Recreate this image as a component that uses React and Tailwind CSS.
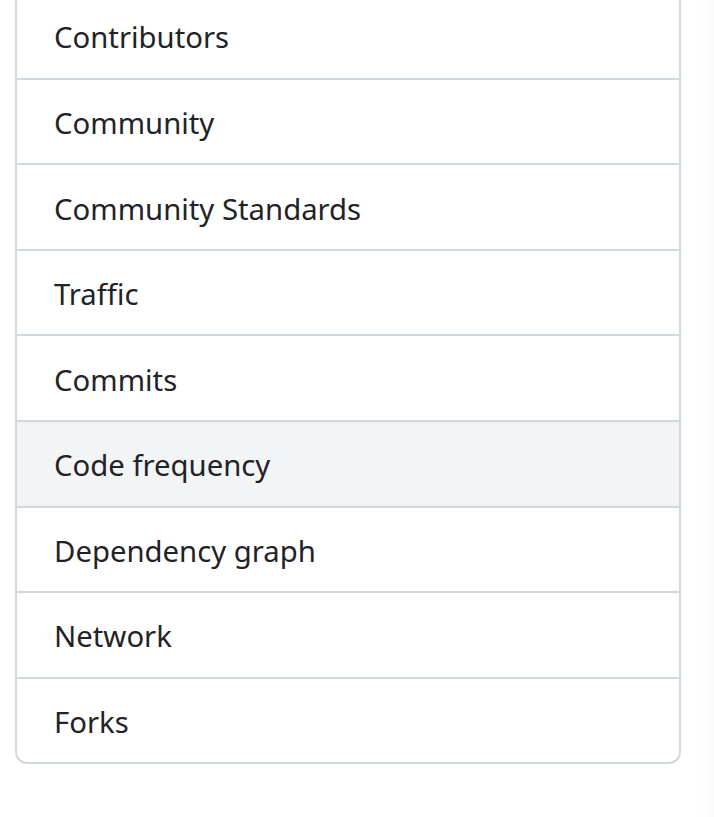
const items = [
  "Contributors",
  "Community",
  "Community Standards",
  "Traffic",
  "Commits",
  "Code frequency",
  "Dependency graph",
  "Network",
  "Forks",
];

export default function App() {
  return (
    <div className="flex h-[817px] w-[714px] overflow-hidden bg-white" style={{ fontFamily: '"Noto Sans", "Open Sans", sans-serif' }}>
      <div className="ml-[15px] w-[666px] shrink-0">
        <nav className="-mt-[8px] flex flex-col rounded-b-[12px] border-2 border-[#d0d7de] bg-white overflow-hidden">
          {items.map((label, i) => (
            <a
              key={label}
              href="#"
              className={
                "flex items-center pl-[37px] pt-[5px] text-[29.3px] text-[#1f2328] " +
                (i === items.length - 1 ? "h-[83px]" : "h-[85.6px] border-b-2 border-[#d0d7de]") +
                (label === "Code frequency" ? " bg-[#f3f4f6]" : "")
              }
            >
              {label}
            </a>
          ))}
        </nav>
      </div>
      <div className="flex-1" />
      <div className="w-[14px] bg-gradient-to-r from-white to-[#fafafb]" />
    </div>
  );
}
